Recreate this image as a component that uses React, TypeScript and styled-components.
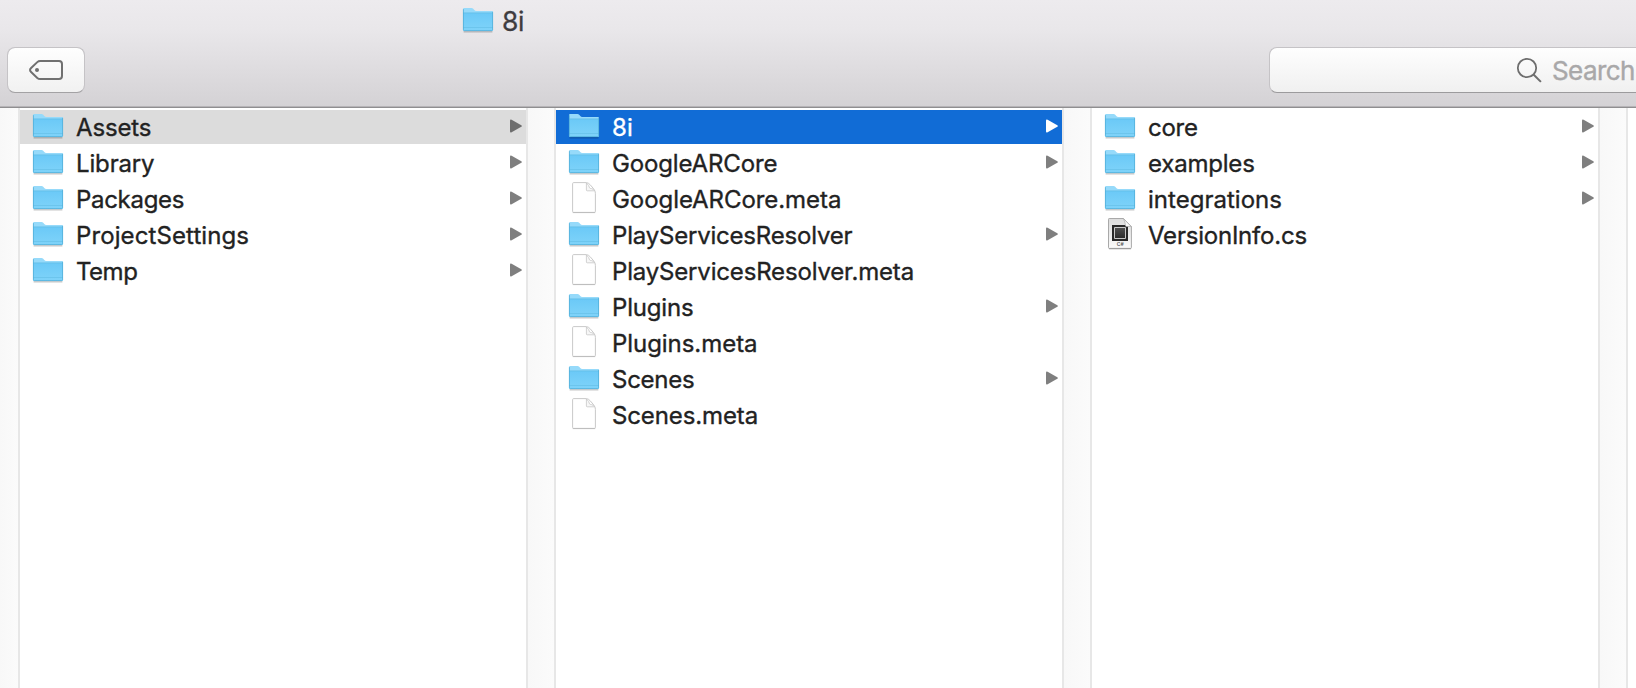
import React from 'react';
import styled, { createGlobalStyle } from 'styled-components';

const GlobalStyle = createGlobalStyle`
  *, *::before, *::after { box-sizing: border-box; }
  body {
    margin: 0;
    overflow: hidden;
    background: #fff;
    color: #222;
    font-family: Inter, "Liberation Sans", sans-serif;
  }
`;

const Window = styled.div`
  display: flex;
  flex-direction: column;
  width: 1636px;
  height: 688px;
  overflow: hidden;
`;

const Header = styled.header`
  flex: none;
  height: 108px;
  background: linear-gradient(#edebee 0, #e9e7ea 30px, #d4d2d5 106px);
  border-bottom: 1px solid #8f8e90;
  box-shadow: inset 0 -1px 0 #b5b3b6;
`;

const TitleBar = styled.div`
  display: flex;
  align-items: center;
  height: 42px;
  padding: 0 0 2px 462px;
`;

const Title = styled.span`
  margin-left: 8px;
  padding-top: 2px;
  color: #3e3c3f;
  font-size: 26.5px;
  line-height: 40px;
  letter-spacing: -0.4px;
  -webkit-text-stroke: 0.3px;
`;

const Toolbar = styled.div`
  display: flex;
  justify-content: space-between;
  padding: 5px 0 0 7px;
`;

const TagButton = styled.button`
  display: flex;
  align-items: center;
  justify-content: center;
  width: 78px;
  height: 46px;
  padding: 0;
  border: 1px solid #c5c3c6;
  border-bottom-color: #a3a2a4;
  border-radius: 8px;
  background: linear-gradient(#fefefe, #f1f1f1);
  background-clip: padding-box;
`;

const SearchField = styled.div`
  display: flex;
  align-items: center;
  width: 367px;
  height: 46px;
  padding-left: 246px;
  border: 1px solid #c5c3c6;
  border-right: 0;
  border-bottom-color: #9c9b9d;
  border-radius: 8px 0 0 8px;
  background: linear-gradient(#fefefe, #f0f0f0);
  overflow: hidden;
`;

const Placeholder = styled.span`
  margin-left: 10px;
  padding-top: 2px;
  color: #a9a8a9;
  font-size: 26px;
  line-height: 44px;
  letter-spacing: -0.6px;
  -webkit-text-stroke: 0.4px;
`;

const Browser = styled.main`
  display: flex;
  flex: 1;
`;

const Gutter = styled.div<{ $first?: boolean }>`
  flex: none;
  width: ${({ $first }) => ($first ? 20 : 30)}px;
  border: solid #e7e7e7;
  border-width: 0 2px 0 ${({ $first }) => ($first ? 0 : 2)}px;
  background: linear-gradient(90deg, #f8f8f8, #fbfbfb);
`;

const Column = styled.ul`
  display: flex;
  flex: none;
  flex-direction: column;
  gap: 2px;
  width: 506px;
  margin: 0;
  padding: 2px 0 0;
  list-style: none;
`;

type Selection = 'active' | 'path' | undefined;

const Row = styled.li<{ $selection: Selection }>`
  display: flex;
  align-items: center;
  height: 34px;
  padding: 0 4px 0 12px;
  color: ${({ $selection }) => ($selection === 'active' ? '#fff' : '#222')};
  background: ${({ $selection }) =>
    $selection === 'active' ? '#116cd6' : $selection === 'path' ? '#dcdcdc' : 'transparent'};
`;

const Name = styled.span<{ $tracking: number }>`
  flex: 1;
  margin-left: 12px;
  padding-top: 2px;
  font-size: 24px;
  line-height: 32px;
  letter-spacing: ${({ $tracking }) => $tracking}px;
  white-space: nowrap;
  -webkit-text-stroke: 0.35px;
`;

const Glyph = styled.svg`
  display: block;
  flex: none;
`;

const FolderIcon = () => (
  <Glyph width="32" height="28" viewBox="0 0 32 28">
    <path d="M1.6 25.8h28.8" stroke="#000" strokeOpacity=".22" strokeWidth="1.4" />
    <path d="M1 4V3.1Q1 2 2.2 2h7.3q1 0 1.7.8l1.1 1.3q.8.9 2 .9H30q1 0 1 1v4H1z" fill="#96dafa" />
    <path d="M1 7h30v17q0 1-1 1H2q-1 0-1-1z" fill="url(#folderFace)" />
    <path d="M1 6.9h30" stroke="#62bde9" strokeWidth=".8" />
    <path d="M1 21.5h30" stroke="#65c0e8" strokeWidth=".7" />
    <path d="M1.4 3.2v20.4q0 1 1 1h27.2q1 0 1-1V5.8" fill="none" stroke="#50add8" strokeWidth=".8" />
  </Glyph>
);

const DocumentIcon = () => (
  <Glyph width="32" height="32" viewBox="0 1 32 32">
    <path d="M5.8 1.6h12.4q2.2 0 4.3 2.5l3.2 3.8q1.7 2.1 1.7 4.4v18.1q0 1-1 1H5.6q-1 0-1-1V2.6q0-1 1.2-1z" fill="#fff" stroke="#c9c9c9" strokeWidth="1" />
    <path d="M4.8 31.6h22.4" stroke="#b7b7b7" strokeWidth=".8" />
    <path d="M18.4 2v7q0 .8.8.8h7.4q-1.3-2-3.1-2.2-1.5-.1-2-.8-.3-2.5-3.1-4.8z" fill="#f7f7f7" stroke="#c6c6c6" strokeWidth=".8" />
  </Glyph>
);

const CodeIcon = () => (
  <Glyph width="32" height="32" viewBox="0 1 32 32">
    <path d="M5.2 1.5h14.3l7.9 8v21.1q0 .8-.8.8H5.2q-.7 0-.7-.8V2.3q0-.8.7-.8z" fill="url(#codePaper)" stroke="#a9a9a9" />
    <path d="M5 31.8h22" stroke="#888" strokeWidth=".7" />
    <path d="M8 8h16v16H8z" fill="#292929" />
    <path d="M10.5 10.5h11v11h-11z" fill="url(#codeScreen)" stroke="#c9c9c9" />
    <path d="M19.5 1.7l7.7 7.8h-4.7q-.8 0-1-.8-.3-3.7-2-7z" fill="#f8f8f8" stroke="#aaa" strokeWidth=".7" />
    <text x="12.8" y="29.2" fontSize="5" fontWeight="600" fontFamily="Inter, sans-serif" fill="#555">C#</text>
  </Glyph>
);

const TagIcon = () => (
  <Glyph width="36" height="22" viewBox="0 0 36 22">
    <path d="M12.2 2H31q3 0 3 3v12q0 3-3 3H12.2q-1.7 0-2.9-1.1L3.1 13q-2.1-2 0-4l6.2-5.9Q10.5 2 12.2 2z" fill="none" stroke="#707070" strokeWidth="2" />
    <circle cx="9" cy="11" r="2" fill="#707070" />
  </Glyph>
);

const SearchIcon = () => (
  <Glyph width="26" height="26" viewBox="0 0 26 26">
    <circle cx="11" cy="11" r="9.2" fill="none" stroke="#6e6e6e" strokeWidth="1.8" />
    <path d="M17.5 17.5l7.4 7.4" stroke="#6e6e6e" strokeWidth="2" />
  </Glyph>
);

const Arrow = ({ color }: { color: string }) => (
  <Glyph width="12" height="16" viewBox="0 0 12 16">
    <path d="M0 1.8Q0 0 1.6.8l9.7 5.4q1.2.8 0 1.6l-9.7 5.4Q0 14 0 12.2z" fill={color} />
  </Glyph>
);

const Definitions = () => (
  <svg width="0" height="0" style={{ position: 'absolute' }} aria-hidden="true">
    <defs>
      <linearGradient id="folderFace" x1="0" y1="0" x2="0" y2="1">
        <stop offset="0" stopColor="#6bc9f7" />
        <stop offset="1" stopColor="#7fd3f9" />
      </linearGradient>
      <linearGradient id="codePaper" x1="0" y1="0" x2="0" y2="1">
        <stop offset="0" stopColor="#dcdcdc" />
        <stop offset="1" stopColor="#fafafa" />
      </linearGradient>
      <linearGradient id="codeScreen" x1="0" y1="0" x2="0" y2="1">
        <stop offset="0" stopColor="#505050" />
        <stop offset="1" stopColor="#2b2b2b" />
      </linearGradient>
    </defs>
  </svg>
);

const IconSlot = styled.span`
  display: flex;
  flex: none;
  align-items: center;
  justify-content: center;
  width: 32px;
  height: 34px;
  padding-bottom: 2px;
`;

type Entry = {
  name: string;
  kind: 'folder' | 'document' | 'code';
  tracking?: number;
  selection?: Selection;
};

const columns: Entry[][] = [
  [
    { name: 'Assets', kind: 'folder', tracking: -0.13, selection: 'path' },
    { name: 'Library', kind: 'folder', tracking: -0.15 },
    { name: 'Packages', kind: 'folder', tracking: -0.3 },
    { name: 'ProjectSettings', kind: 'folder', tracking: 0.1 },
    { name: 'Temp', kind: 'folder', tracking: -0.5 },
  ],
  [
    { name: '8i', kind: 'folder', tracking: 0.2, selection: 'active' },
    { name: 'GoogleARCore', kind: 'folder', tracking: -0.14 },
    { name: 'GoogleARCore.meta', kind: 'document', tracking: -0.06 },
    { name: 'PlayServicesResolver', kind: 'folder', tracking: -0.2 },
    { name: 'PlayServicesResolver.meta', kind: 'document', tracking: -0.17 },
    { name: 'Plugins', kind: 'folder', tracking: -0.17 },
    { name: 'Plugins.meta', kind: 'document', tracking: -0.05 },
    { name: 'Scenes', kind: 'folder', tracking: -0.25 },
    { name: 'Scenes.meta', kind: 'document', tracking: -0.12 },
  ],
  [
    { name: 'core', kind: 'folder', tracking: -0.25 },
    { name: 'examples', kind: 'folder', tracking: -0.2 },
    { name: 'integrations', kind: 'folder', tracking: 0.02 },
    { name: 'VersionInfo.cs', kind: 'code', tracking: -0.22 },
  ],
];

const icons = { folder: FolderIcon, document: DocumentIcon, code: CodeIcon };

const arrowColor = (selection: Selection) =>
  selection === 'active' ? '#fff' : selection === 'path' ? '#6e6e6e' : '#7f7f7f';

const FileRow = ({ entry }: { entry: Entry }) => {
  const Icon = icons[entry.kind];
  return (
    <Row $selection={entry.selection}>
      <IconSlot><Icon /></IconSlot>
      <Name $tracking={entry.tracking ?? -0.2}>{entry.name}</Name>
      {entry.kind === 'folder' && <Arrow color={arrowColor(entry.selection)} />}
    </Row>
  );
};

export default function App() {
  return (
    <Window>
      <GlobalStyle />
      <Definitions />
      <Header>
        <TitleBar>
          <FolderIcon />
          <Title>8i</Title>
        </TitleBar>
        <Toolbar>
          <TagButton aria-label="Edit tags"><TagIcon /></TagButton>
          <SearchField>
            <SearchIcon />
            <Placeholder>Search</Placeholder>
          </SearchField>
        </Toolbar>
      </Header>
      <Browser>
        <Gutter $first />
        {columns.map((entries, index) => (
          <React.Fragment key={index}>
            <Column>
              {entries.map((entry) => <FileRow key={entry.name} entry={entry} />)}
            </Column>
            <Gutter />
          </React.Fragment>
        ))}
      </Browser>
    </Window>
  );
}
